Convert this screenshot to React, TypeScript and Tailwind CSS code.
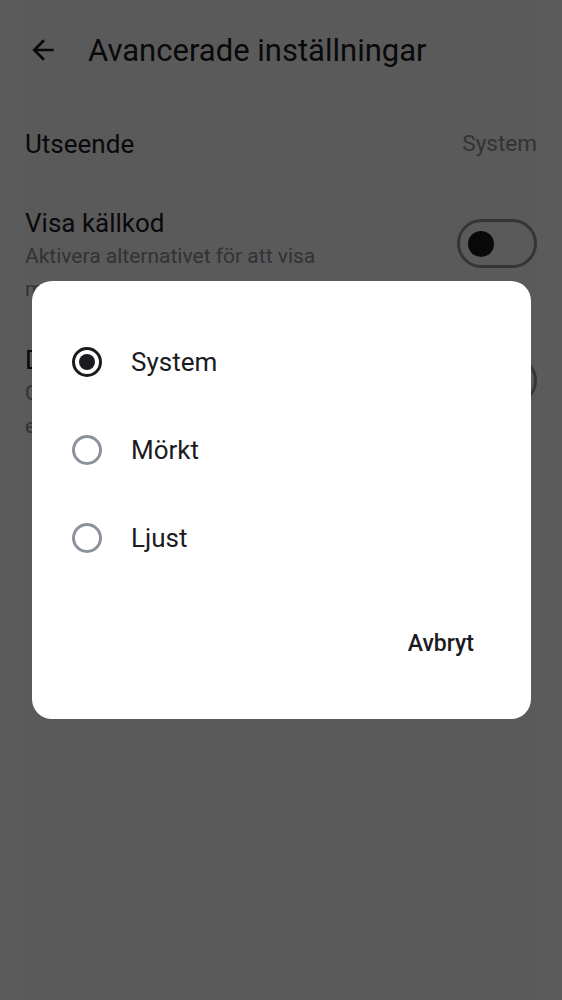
import { useState } from "react";

const options = ["System", "Mörkt", "Ljust"];

function Toggle() {
    return (
        <div className="flex h-[49px] w-[80px] shrink-0 items-center rounded-full border-[3px] border-[#8f939b] pl-[8px]">
            <div className="h-[26px] w-[26px] rounded-full bg-[#1b1b1f]" />
        </div>
    );
}

function Radio({ checked }: { checked: boolean }) {
    return checked ? (
        <div className="flex h-[30px] w-[30px] shrink-0 items-center justify-center rounded-full border-[3px] border-[#1b1b1f]">
            <div className="h-[16px] w-[16px] rounded-full bg-[#1b1b1f]" />
        </div>
    ) : (
        <div className="h-[30px] w-[30px] shrink-0 rounded-full border-[3px] border-[#8b929c]" />
    );
}

export default function App() {
    const [selected, setSelected] = useState("System");

    return (
        <div
            className="relative h-[1000px] w-full overflow-hidden bg-[#fdfdfd] text-[#1b1b1f]"
            style={{ fontFamily: "Roboto, 'Noto Sans', sans-serif" }}
        >
            <div className="ml-[25px] mr-[25px] h-full bg-[#f8f8f8]">
                <header className="flex h-[100px] items-center">
                    <svg
                        width="32"
                        height="32"
                        viewBox="0 0 24 24"
                        className="ml-[2px] text-[#1b1b1f]"
                    >
                        <path
                            d="M20 11H7.83l5.59-5.59L12 4l-8 8 8 8 1.41-1.41L7.83 13H20v-2z"
                            fill="currentColor"
                        />
                    </svg>
                    <h1 className="ml-[29px] text-[31px] leading-none">
                        Avancerade inställningar
                    </h1>
                </header>

                <div className="flex h-[88px] items-center justify-between">
                    <span className="text-[26px]">Utseende</span>
                    <span className="text-[22.5px] text-[#8a8d94]">System</span>
                </div>

                <div className="mt-[18px] flex items-start justify-between">
                    <div className="w-[400px]">
                        <div className="text-[26px] leading-[34px]">Visa källkod</div>
                        <div className="text-[21px] leading-[33px] text-[#8a8d94]">
                            Aktivera alternativet för att visa meddelandets källkod i detaljvyn
                        </div>
                    </div>
                    <div className="mt-[13px]">
                        <Toggle />
                    </div>
                </div>

                <div className="mt-[37px] flex items-start justify-between">
                    <div className="w-[400px]">
                        <div className="text-[26px] leading-[34px]">Dölj bilder</div>
                        <div className="text-[21px] leading-[33px] text-[#8a8d94]">
                            Clienten laddar inte bilder i meddelanden
                            <br />
                            externt innehåll blockeras
                        </div>
                    </div>
                    <div className="mt-[13px]">
                        <Toggle />
                    </div>
                </div>
            </div>

            <div className="absolute inset-0 flex items-center justify-center bg-black/[0.64]">
                <div className="ml-[1px] w-[499px] rounded-[20px] bg-white pt-[37px] pb-[51px]">
                    {options.map((option) => (
                        <button
                            key={option}
                            type="button"
                            onClick={() => setSelected(option)}
                            className="flex h-[88px] w-full items-center pl-[40px] text-left"
                        >
                            <Radio checked={selected === option} />
                            <span className="ml-[29px] text-[26px] text-[#1b1b1f]">
                                {option}
                            </span>
                        </button>
                    ))}
                    <div className="mt-[38px] flex justify-end pr-[57px]">
                        <button
                            type="button"
                            className="h-[48px] text-[23px] font-medium text-[#1b1b1f]"
                        >
                            Avbryt
                        </button>
                    </div>
                </div>
            </div>
        </div>
    );
}
